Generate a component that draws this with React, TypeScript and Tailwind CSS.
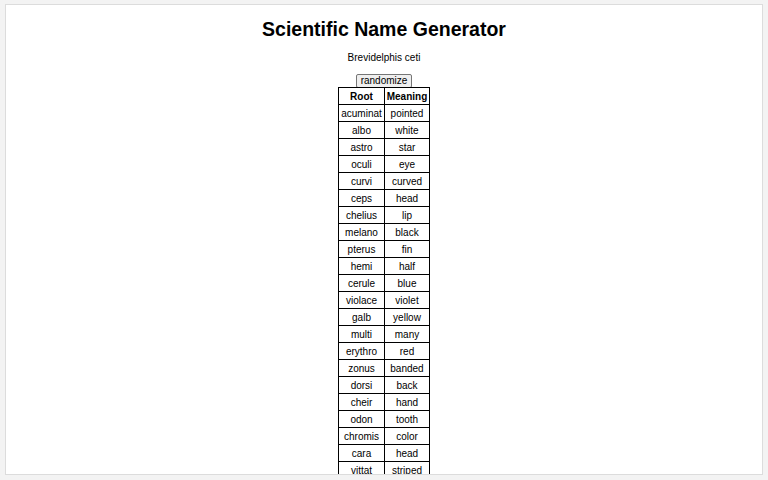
import React from "react";

const roots: [string, string][] = [
  ["acuminat", "pointed"],
  ["albo", "white"],
  ["astro", "star"],
  ["oculi", "eye"],
  ["curvi", "curved"],
  ["ceps", "head"],
  ["chelius", "lip"],
  ["melano", "black"],
  ["pterus", "fin"],
  ["hemi", "half"],
  ["cerule", "blue"],
  ["violace", "violet"],
  ["galb", "yellow"],
  ["multi", "many"],
  ["erythro", "red"],
  ["zonus", "banded"],
  ["dorsi", "back"],
  ["cheir", "hand"],
  ["odon", "tooth"],
  ["chromis", "color"],
  ["cara", "head"],
  ["vittat", "striped"],
  ["brevi", "short"],
  ["delphis", "dolphin"],
];

const App = () => {
  return (
    <div className="min-h-[480px] bg-[#f3f3f3] pt-[4px] px-[5px] font-['Liberation_Sans',Arial,sans-serif] text-black">
      <div className="h-[471px] overflow-hidden border border-[#dcdcdc] bg-white flex flex-col items-center">
        <h1 className="mt-[12px] text-[19.5px] leading-[24px] font-bold">Scientific Name Generator</h1>
        <p className="mt-[11px] text-[10px] leading-[12px]">Brevidelphis ceti</p>
        <button className="mt-[10px] h-[14px] px-[4px] text-[10px] leading-[12px] border border-[#767676] rounded-[2px] bg-[#efefef]">
          randomize
        </button>
        <table className="border-collapse text-[10px] -mt-[1px]">
          <thead>
            <tr className="h-[17px]">
              <th className="w-[46px] border border-black font-bold p-0">Root</th>
              <th className="w-[45px] border border-black font-bold p-0">Meaning</th>
            </tr>
          </thead>
          <tbody>
            {roots.map(([root, meaning], i) => (
              <tr key={i} className="h-[17px]">
                <td className="border border-black text-center p-0">{root}</td>
                <td className="border border-black text-center p-0">{meaning}</td>
              </tr>
            ))}
          </tbody>
        </table>
      </div>
    </div>
  );
};

export default App;
